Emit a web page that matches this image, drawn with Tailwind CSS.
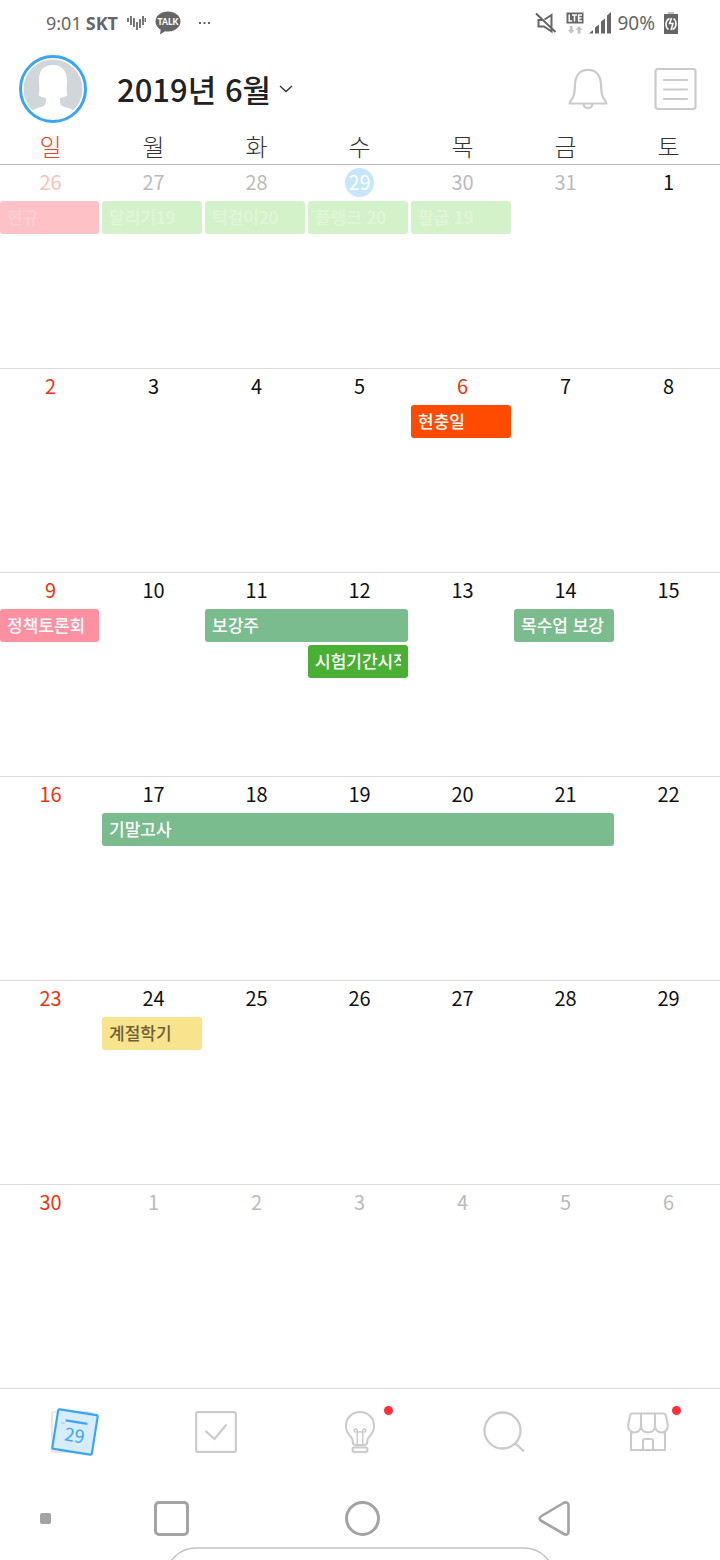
<!DOCTYPE html>
<html lang="ko">
<head>
<meta charset="utf-8">
<meta name="viewport" content="width=device-width, initial-scale=1">
<title>2019년 6월</title>
<script src="https://cdn.jsdelivr.net/npm/@tailwindcss/browser@4"></script>
</head>
<body class="flex min-h-screen flex-col overflow-x-hidden bg-white font-['Noto_Sans_CJK_KR',sans-serif] text-[#222]">

<!-- Status bar -->
<div class="flex h-[46px] items-center pr-[42px] pl-[46px] font-['Noto_Sans',sans-serif] text-[18px] text-[#666]">
  <span>9:01</span>
  <span class="ml-1 font-bold">SKT</span>
  <svg class="ml-2 h-4 w-5" viewBox="0 0 20 16" stroke="#777" stroke-width="2" fill="none" aria-hidden="true"><path d="M2 3v4M5 1v9M8 3v9M11 7v8M14 4v9M17 1v9M19.500 3v4"/></svg>
  <svg class="ml-[9px] h-6 w-[26px]" viewBox="0 0 26 24" aria-hidden="true"><path d="M13 0.500C5.800 0.500.5 4.900.5 10.500c0 3.600 2.100 6.500 5.200 8.300L5 23.600l5-3.400c1 .2 2 .3 3 .3 7.200 0 12.500-4.400 12.500-10S20.200.5 13 .5z" fill="#666"/><text x="13" y="13.500" text-anchor="middle" font-family="Lato, sans-serif" font-weight="900" font-size="8.500" fill="#fff">TALK</text></svg>
  <svg class="ml-[18px] h-1 w-[11px]" viewBox="0 0 11 4" fill="#666" aria-hidden="true"><path d="M0 1h2v2H0zM4.500 1h2v2h-2zM9 1h2v2H9z"/></svg>
  <svg class="ml-auto h-[22px] w-[22px]" viewBox="0 0 22 22" fill="none" stroke="#666" stroke-width="2" aria-hidden="true"><path d="M7 8H3.500v6.500h5.500l7.500 5V3L9.500 7.500M1 1.500l19.500 18.500"/></svg>
  <svg class="ml-[9px] h-[22px] w-[18px]" viewBox="0 0 18 22" aria-hidden="true"><path d="M.5.500h17v11H.5z" fill="#666"/><path d="M3.200 2.500v6.500h3M6 3h5M8.500 3v6.500M16 3h-3.400v6H16M12.500 6H15.500" fill="none" stroke="#fff" stroke-width="1.500"/><path d="M3.800 14h2.800v4H8.500l-3.300 3.700L2 18h1.800zM11.600 21.700h2.800v-4h1.800L13 14l-3.200 3.700h1.800z" fill="#c2c2c2"/></svg>
  <svg class="ml-[5px] h-[22px] w-[23px]" viewBox="0 0 23 22" fill="#666" aria-hidden="true"><path d="M0 21.500h4V18zM6 15.500l4-3v9h-4zM12 9.500l4-3v15h-4zM18 3.500l4-3.500v21.500h-4z"/></svg>
  <span class="ml-[5px] text-[19px]">90%</span>
  <svg class="ml-[9px] h-[22px] w-[14px]" viewBox="0 0 14 22" aria-hidden="true"><path d="M4 0h6v2H4z" fill="#c2c2c2"/><path d="M0 2h14v20H0z" fill="#666"/><path d="M5.500 6.500C1 8.500 1 15 4.500 17.500M8.500 17.500c4.500-2 4.500-8.500 1-11M7.500 6L5.500 11.500h3.500L7 18" fill="none" stroke="#fff" stroke-width="1.500"/></svg>
</div>

<header class="flex h-[86px] items-center pr-[23px] pl-[19px]">
  <button type="button" aria-label="프로필" class="size-[68px]">
    <svg class="size-full" viewBox="0 0 68 68">
      <defs><clipPath id="face"><circle cx="34" cy="34" r="29.500"/></clipPath></defs>
      <circle cx="34" cy="34" r="32.500" fill="#fff" stroke="#3ba5f5" stroke-width="3"/>
      <g clip-path="url(#face)"><path d="M0 0h68v68H0z" fill="#d0d6d9"/><path d="M34 10C30 10 29 11 27 11.500C21.500 14 20 19 20 26C20 32 21 36 19.500 40C21.500 42 24 42.500 27 43C27 47 27 49.500 24.500 51C20 53 16 53 11 57V68H57V57C52 53 48 53 43.500 51C41 49.500 41 47 41 43C44 42.500 46.500 42 48.500 40C47 36 48 32 48 26C48 16 43 10 34 10Z" fill="#fff"/></g>
    </svg>
  </button>
  <button type="button" class="ml-[30px] flex items-center gap-2">
    <h1 class="text-[31px] leading-10 font-medium">2019년 6월</h1>
    <svg class="h-2 w-3.5" viewBox="0 0 14 8" fill="none" stroke="#333" stroke-width="1.300" aria-hidden="true"><path d="M1 1l6 5.500L13 1"/></svg>
  </button>
  <button type="button" aria-label="알림" class="ml-auto">
    <svg class="h-[42px] w-10" viewBox="0 0 40 42" fill="none" stroke="#cbcbcb" stroke-width="2.200" stroke-linejoin="round"><path d="M20 1.800C11.500 1.800 7.500 8 7 16c-.4 8-.5 12.500-4 16.500-1 1.300-1.500 2-1.300 3h36.600c.2-1-.3-1.700-1.300-3-3.500-4-3.600-8.500-4-16.500-.5-8-4.500-14.200-13-14.200zM15.500 36c.5 5.500 8.500 5.500 9 0"/></svg>
  </button>
  <button type="button" aria-label="메뉴" class="ml-[46px]">
    <svg class="h-[43px] w-[43px]" viewBox="0 0 43 43" fill="none" stroke="#cbcbcb" stroke-width="2.200" stroke-linecap="round"><rect x="1.500" y="1" width="40" height="40" rx="2.500"/><path d="M10 12h23M10 21.500h23M10 31h23"/></svg>
  </button>
</header>

<main class="-ml-px flex flex-1 flex-col">
  <div class="grid h-8 grid-cols-7 text-center text-[24px] leading-[28px] font-light text-[#333]">
    <span class="text-[#f0431f]">일</span><span>월</span><span>화</span><span>수</span><span>목</span><span>금</span><span>토</span>
  </div>
  <div id="weeks" class="grid flex-1 auto-rows-fr"></div>
</main>

<nav aria-label="메뉴" class="grid h-[88px] grid-cols-5 items-center justify-items-center border-t border-[#dcdcdc] pb-0.5">
  <button type="button" aria-label="달력">
    <svg class="h-[50px] w-[56px]" viewBox="0 0 56 50">
      <rect x="8" y="5" width="40" height="40" rx="2" fill="none" stroke="#e8e8e8" stroke-width="2"/>
      <g transform="rotate(9 31 25)"><rect x="11" y="5" width="40" height="40" rx="1.500" fill="#d8edfc" stroke="#3ba5f5" stroke-width="2.200"/><path d="M20 15h22" stroke="#3ba5f5" stroke-width="2.200"/><text x="31" y="35" text-anchor="middle" font-family="Noto Sans CJK KR, sans-serif" font-size="18" fill="#3ba5f5">29</text></g>
      <path d="M17 16h4" stroke="#b8dcf5" stroke-width="2"/>
    </svg>
  </button>
  <button type="button" aria-label="할 일">
    <svg class="h-[42px] w-[42px]" viewBox="0 0 42 42" fill="none" stroke="#cbcbcb" stroke-width="2.200"><rect x="1.100" y="1.100" width="39.800" height="39.800" rx="2"/><path d="M10.500 20l9 8L31.500 13.500"/></svg>
  </button>
  <button type="button" aria-label="아이디어" class="relative">
    <svg class="h-[42px] w-[30px]" viewBox="0 0 30 42" fill="none" stroke="#cbcbcb" stroke-width="2"><path d="M15 1C7 1 1 7 1 15c0 5 2.500 8.500 5 11 1.500 1.500 1.800 3 1.800 5 0 2 .7 3 2.700 3h9c2 0 2.700-1 2.700-3 0-2 .3-3.500 1.800-5 2.500-2.500 5-6 5-11C29 7 23 1 15 1z"/><rect x="7.500" y="36.500" width="15" height="4.500" rx="2.200"/><path d="M12.300 33V20.500M17.700 33V20.500M12.300 21h5.400" stroke-width="1.500"/><circle cx="10.700" cy="19.500" r="1.600" stroke-width="1.500"/><circle cx="19.300" cy="19.500" r="1.600" stroke-width="1.500"/></svg>
    <span class="absolute -top-[5px] -right-[18px] size-[9px] rounded-full bg-[#f9303c]"></span>
  </button>
  <button type="button" aria-label="검색">
    <svg class="h-[42px] w-[42px]" viewBox="0 0 42 42" fill="none" stroke="#cbcbcb" stroke-width="2.300"><circle cx="19.500" cy="19.500" r="18"/><path d="M32.500 32.500l8.500 8"/></svg>
  </button>
  <button type="button" aria-label="스토어" class="relative">
    <svg class="h-[42px] w-[42px]" viewBox="0 0 42 42" fill="none" stroke="#cbcbcb" stroke-width="2.100" stroke-linejoin="round"><path d="M5.500 2.500h31c1.500 0 2 .5 2.300 2 1 4 2 8 2 10.500 0 4-3 6.500-6.300 6.500s-6.500-2.500-6.500-6.500c0 4-3 6.500-7 6.500s-7-2.500-7-6.500c0 4-3.200 6.500-6.500 6.500S1.200 19 1.200 15c0-2.500 1-6.500 2-10.500.3-1.500.8-2 2.300-2zM14 2.500v13M28 2.500v13M4 21v18h34V21M16 39V30c0-1.500.5-2 2-2h6c1.500 0 2 .5 2 2v9"/></svg>
    <span class="absolute -top-[5px] -right-3 size-[9px] rounded-full bg-[#f9303c]"></span>
  </button>
</nav>

<!-- System navigation -->
<footer class="pt-3">
  <div class="grid h-[59px] grid-cols-[90fr_162fr_220fr_164fr_84fr] items-center justify-items-center pt-0.5">
    <span class="size-[11px] rounded-xs bg-[#a3a3a3]"></span>
    <button type="button" aria-label="최근 앱" class="size-[35px] rounded-[5px] border-[3px] border-[#a3a3a3]"></button>
    <button type="button" aria-label="홈" class="size-[35px] rounded-full border-[3px] border-[#a3a3a3]"></button>
    <button type="button" aria-label="뒤로"><svg class="h-[35px] w-8" viewBox="0 0 32 35" fill="none" stroke="#a3a3a3" stroke-width="2.600" stroke-linejoin="round"><path d="M25.500 2C28.500.5 30.500 2 30.500 4v27c0 2.500-2 3.300-4.500 2L3.500 20c-2.500-1.500-2.500-3.500 0-5z"/></svg></button>
  </div>
  <svg class="mx-auto h-[13px] w-[390px]" viewBox="0 0 390 13" fill="none" stroke="#c4c4c4" stroke-width="1.500" aria-hidden="true"><path d="M.8 31A30 30 0 0 1 31 1H359a30 30 0 0 1 30.200 30"/></svg>
</footer>

<script>
const INK = 'text-[#111]', RED = 'text-[#ee3311]', DIM = 'text-[#bbb]';
const GREEN = 'bg-[#7abc8e] text-white', PALE = 'bg-[#d4f2c9] text-[#e0f6d8]';
// Event: [first column, column span, row, label, colours]
const weeks = [
  { days: [26,27,28,29,30,31,1], dim: [0,5], today: 3, events: [[0,1,0,'현규','bg-[#fdc1c6] text-[#fdd0d4]'],[1,1,0,'달리기19',PALE],[2,1,0,'턱걸이20',PALE],[3,1,0,'플랭크 20',PALE],[4,1,0,'팔굽 19',PALE]] },
  { days: [2,3,4,5,6,7,8], holiday: 4, events: [[4,1,0,'현충일','bg-[#ff4b00] text-white']] },
  { days: [9,10,11,12,13,14,15], events: [[0,1,0,'정책토론회','bg-[#ff90a1] text-white'],[2,2,0,'보강주',GREEN],[5,1,0,'목수업 보강',GREEN],[3,1,1,'시험기간시작','bg-[#49b033] text-white']] },
  { days: [16,17,18,19,20,21,22], events: [[1,5,0,'기말고사',GREEN]] },
  { days: [23,24,25,26,27,28,29], events: [[1,1,0,'계절학기','bg-[#f7e48c] text-[#6b6138]']] },
  { days: [30,1,2,3,4,5,6], dim: [1,6], events: [] }
];
document.getElementById('weeks').innerHTML = weeks.map((w, n) => {
  const days = w.days.map((d, i) => {
    const out = w.dim && i >= w.dim[0] && i <= w.dim[1];
    const tone = w.today === i ? 'bg-[#c5e6fd] text-white' : out ? (i ? DIM : 'text-[#fbc2b8]') : (i === 0 || w.holiday === i) ? RED : INK;
    return `<button type="button" class="size-[29px] rounded-full pb-0.5 text-[20px] leading-[27px] ${tone}">${d}</button>`;
  }).join('');
  const events = w.events.map(([c, span, row, label, tone]) =>
    `<button type="button" class="mr-[3px] h-[33px] min-w-0 rounded-[3px] px-[7px] pb-0.5 text-left text-[17px] leading-[31px] font-medium ${c ? '' : 'ml-px'} ${tone}" style="grid-column:${c + 1}/span ${span};grid-row:${row + 1}"><span class="block overflow-hidden whitespace-nowrap">${label}</span></button>`).join('');
  return `<section class="border-t pb-2 ${n ? 'border-[#dcdcdc]' : 'border-[#bbb]'}">
    <div class="grid grid-cols-7 justify-items-center pt-[3px]">${days}</div>
    <div class="mt-1 grid grid-cols-7 gap-y-[3px]">${events}</div></section>`;
}).join('');
</script>
</body>
</html>
